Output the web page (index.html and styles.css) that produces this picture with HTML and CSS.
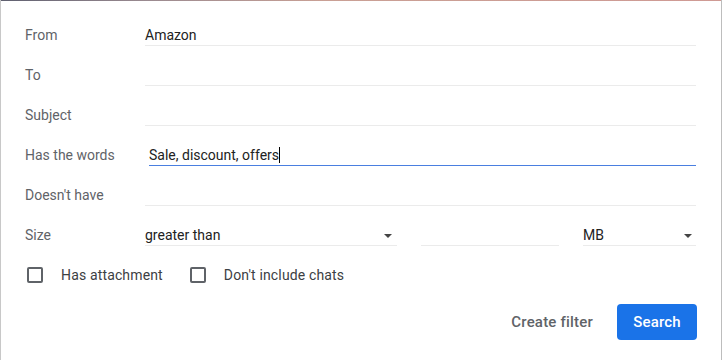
FILE: index.html
```html
<!DOCTYPE html>
<html>
<head>
<meta charset="utf-8">
<link rel="stylesheet" href="styles.css">
</head>
<body>
<div class="dialog">
  <div class="topline"></div>
  <div class="form">
    <div class="row"><div class="label">From</div><div class="field">Amazon</div></div>
    <div class="row"><div class="label">To</div><div class="field"></div></div>
    <div class="row"><div class="label">Subject</div><div class="field"></div></div>
    <div class="row"><div class="label">Has the words</div><div class="field focused">Sale, discount, offers<span class="caret"></span></div></div>
    <div class="row"><div class="label">Doesn't have</div><div class="field"></div></div>
    <div class="row">
      <div class="label">Size</div>
      <div class="size">
        <div class="field select sel-op">greater than<span class="arrow"></span></div>
        <div class="field num"></div>
        <div class="field select sel-unit">MB<span class="arrow"></span></div>
      </div>
    </div>
    <div class="checks">
      <div class="check"><span class="box"></span><span class="clabel">Has attachment</span></div>
      <div class="check"><span class="box"></span><span class="clabel">Don't include chats</span></div>
    </div>
    <div class="actions">
      <button class="btn-text">Create filter</button>
      <button class="btn-primary">Search</button>
    </div>
  </div>
</div>
</body>
</html>
```
FILE: styles.css
```css
html, body {
  margin: 0;
  padding: 0;
  background: #fff;
}
body {
  font-family: Roboto, "Liberation Sans", Arial, sans-serif;
  font-size: 14px;
  color: #222;
}
.dialog {
  width: 722px;
  height: 360px;
  box-sizing: border-box;
  border-left: 1px solid #c8c8c8;
  border-right: 1px solid #bdbdbd;
  display: flex;
  flex-direction: column;
}
.topline {
  height: 1px;
  background: linear-gradient(90deg, #5f6070 0%, #9a8a90 20%, #c9a095 45%, #cf9a94 100%);
  flex: none;
}
.form {
  padding: 5px 25px 0 24px;
  display: flex;
  flex-direction: column;
}
.row {
  height: 40px;
  display: flex;
  align-items: flex-end;
}
.label {
  width: 120px;
  flex: none;
  color: #5f6368;
  line-height: 20px;
  padding-bottom: 1px;
}
.field {
  flex: 1;
  height: 20px;
  line-height: 20px;
  border-bottom: 1px solid #ebebeb;
  position: relative;
  white-space: nowrap;
}
.field.focused {
  margin-left: 4px;
  border-bottom-color: #4a7fe0;
}
.caret {
  display: inline-block;
  width: 1px;
  height: 16px;
  background: #000;
  vertical-align: -3px;
}
.size {
  flex: 1;
  display: flex;
  align-items: flex-end;
}
.sel-op {
  flex: none;
  width: 252px;
}
.num {
  flex: none;
  width: 138px;
  margin-left: 24px;
}
.sel-unit {
  flex: none;
  width: 113px;
  margin-left: 24px;
}
.select {
  display: flex;
  align-items: center;
  justify-content: space-between;
}
.arrow {
  width: 0;
  height: 0;
  border-left: 4px solid transparent;
  border-right: 4px solid transparent;
  border-top: 4px solid #444;
  margin-right: 5px;
  margin-top: 2px;
}
.sel-unit .arrow {
  margin-right: 4px;
}
.checks {
  margin-top: 19px;
  height: 20px;
  display: flex;
  align-items: center;
  gap: 25px;
  color: #3c4043;
}
.check {
  display: flex;
  align-items: center;
}
.box {
  width: 16px;
  height: 16px;
  box-sizing: border-box;
  border: 2px solid #5f6368;
  border-radius: 2px;
  margin-left: 2px;
}
.clabel {
  margin-left: 18px;
  line-height: 20px;
  letter-spacing: 0.15px;
}
.actions {
  margin-top: 19px;
  display: flex;
  justify-content: flex-end;
  gap: 12px;
  margin-right: -1px;
}
.btn-text, .btn-primary {
  font-family: Roboto, "Liberation Sans", Arial, sans-serif;
  font-size: 15px;
  letter-spacing: 0.2px;
  font-weight: 500;
  height: 36px;
  border: none;
  border-radius: 4px;
  padding: 0 12px;
  cursor: pointer;
}
.btn-text {
  background: transparent;
  color: #5f6368;
}
.btn-primary {
  background: #1a73e8;
  color: #fff;
  width: 80px;
  padding: 0;
}
```
